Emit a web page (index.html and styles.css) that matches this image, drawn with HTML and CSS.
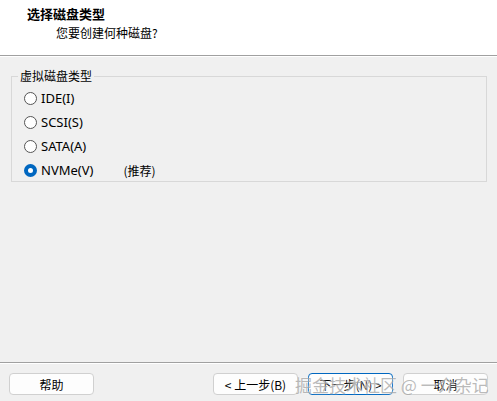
FILE: index.html
```html
<!DOCTYPE html>
<html>
<head>
<meta charset="utf-8">
<link rel="stylesheet" href="styles.css">
</head>
<body>
<div class="dialog">
  <div class="header">
    <div class="title">选择磁盘类型</div>
    <div class="subtitle">您要创建何种磁盘?</div>
  </div>
  <div class="main">
    <fieldset class="group">
      <legend class="legend">虚拟磁盘类型</legend>
      <div class="option"><span class="radio"></span><span class="label">IDE(I)</span></div>
      <div class="option"><span class="radio"></span><span class="label">SCSI(S)</span></div>
      <div class="option"><span class="radio"></span><span class="label">SATA(A)</span></div>
      <div class="option"><span class="radio checked"></span><span class="label">NVMe(V)</span><span class="hint">(推荐)</span></div>
    </fieldset>
  </div>
  <div class="footer">
    <button class="btn">帮助</button>
    <div class="spacer"></div>
    <button class="btn">&lt; 上一步(B)</button>
    <button class="btn primary">下一步(N) &gt;</button>
    <button class="btn">取消</button>
    <div class="watermark">掘金技术社区 @ 一介杂记</div>
  </div>
</div>
</body>
</html>
```

FILE: styles.css
```css
html, body {
  margin: 0;
  padding: 0;
}
body {
  width: 497px;
  height: 401px;
  background: #f0f0f0;
  font-family: "Noto Sans CJK SC", "Noto Sans", sans-serif;
  font-size: 12px;
  color: #000;
  overflow: hidden;
}
.dialog {
  width: 497px;
  height: 401px;
  display: flex;
  flex-direction: column;
}
.header {
  background: #fff;
  border-bottom: 1px solid #a0a0a0;
  box-shadow: 0 1px 0 #fff;
  padding: 4px 0 0 27px;
  box-sizing: content-box;
  height: 51px;
}
.title {
  font-weight: bold;
  font-size: 13px;
  line-height: 19px;
}
.subtitle {
  margin-left: 29px;
  line-height: 19px;
}
.main {
  flex: 1;
  padding: 12px 10px 0 11px;
}
.group {
  margin: 0;
  border: 1px solid #d8d8d8;
  padding: 2px 0 8px 12px;
  min-height: 0;
  height: 114px;
  box-sizing: border-box;
}
.legend {
  padding: 0 2px;
  margin-left: -6px;
  line-height: 16px;
}
.option {
  display: flex;
  align-items: center;
  height: 24px;
}
.radio {
  width: 11px;
  height: 11px;
  border: 1px solid #555;
  border-radius: 50%;
  background: #fff;
  box-sizing: content-box;
  margin-right: 4px;
}
.radio.checked {
  width: 5px;
  height: 5px;
  border: 4px solid #0067c0;
  background: #fff;
}
.label {
  font-family: "Noto Sans", sans-serif;
  font-size: 13px;
}
.hint {
  margin-left: 30px;
}
.footer {
  position: relative;
  height: 39px;
  border-top: 1px solid #a0a0a0;
  box-shadow: inset 0 1px 0 #fff;
  display: flex;
  align-items: flex-start;
  padding: 10px 9px 0 9px;
  gap: 10px;
  box-sizing: border-box;
}
.spacer {
  flex: 1;
}
.btn {
  width: 85px;
  height: 22px;
  background: #fdfdfd;
  border: 1px solid #d0d0d0;
  border-radius: 4px;
  font-family: "Noto Sans CJK SC", "Noto Sans", sans-serif;
  font-size: 12px;
  padding: 0;
  color: #000;
}
.btn.primary {
  border: 1px solid #0067c0;
}
.watermark {
  position: absolute;
  left: 295px;
  top: 9px;
  font-size: 17px;
  color: rgba(140, 140, 140, 0.6);
  text-shadow: 0 0 2px #fff;
  white-space: nowrap;
  pointer-events: none;
}
```
